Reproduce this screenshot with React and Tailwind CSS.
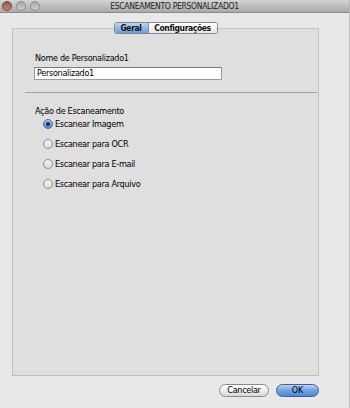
import React from "react";

const font = { fontFamily: '"DejaVu Sans Condensed", "Liberation Sans", Arial, sans-serif' };

function Radio({ checked, label }) {
  return (
    <div className="flex items-center h-[20px]">
      {checked ? (
        <span className="w-[10px] h-[10px] rounded-full border border-[#4a6a9a] bg-gradient-to-b from-[#a9c8ef] to-[#4f86d0] flex items-center justify-center">
          <span className="w-[4px] h-[4px] rounded-full bg-[#1d2a44]"></span>
        </span>
      ) : (
        <span className="w-[10px] h-[10px] rounded-full border border-[#8c8c8c] bg-gradient-to-b from-[#f4f4f4] to-[#dcdcdc]"></span>
      )}
      <span className="ml-[2px] text-[9px] leading-[12px] tracking-[-0.3px] text-black">{label}</span>
    </div>
  );
}

export default function App() {
  return (
    <div className="w-[350px] h-[408px] bg-[#e8e8e8] flex flex-col overflow-hidden border-r border-[#b8b8b8]" style={font}>
      <div className="relative h-[13px] bg-gradient-to-b from-[#d4d4d4] to-[#a9a9a9] border-b border-[#8a8a8a] flex items-center justify-center">
        <div className="absolute left-[2px] top-[1px] flex gap-[4px]">
          <span className="w-[10px] h-[10px] rounded-full bg-gradient-to-b from-[#8a5a4a] to-[#c98a6a] border border-[#6e4a3e]"></span>
          <span className="w-[10px] h-[10px] rounded-full bg-gradient-to-b from-[#a8a8a8] to-[#d0d0d0] border border-[#8e8e8e]"></span>
          <span className="w-[10px] h-[10px] rounded-full bg-gradient-to-b from-[#a8a8a8] to-[#d0d0d0] border border-[#8e8e8e]"></span>
        </div>
        <span className="text-[8.5px] leading-[12px] tracking-[-0.3px] text-[#222]">ESCANEAMENTO PERSONALIZADO1</span>
      </div>
      <div className="pl-[12px] pr-[30px]">
        <div className="mt-[9px] flex justify-center relative z-10">
          <div className="flex h-[12px] rounded-[3px] border border-[#888] overflow-hidden text-[8.5px] leading-[10px] font-bold tracking-[-0.4px]">
            <span className="w-[34px] flex items-center justify-center bg-gradient-to-b from-[#bcd6f4] to-[#6a9ddc] text-[#111] border-r border-[#7e8ea8]">Geral</span>
            <span className="w-[68px] flex items-center justify-center bg-gradient-to-b from-[#ffffff] to-[#e6e6e6] text-[#111]">Configurações</span>
          </div>
        </div>
        <div className="-mt-[6px] h-[348px] bg-[#dfdfdf] border border-[#c2c2c2] border-b-[#bdbdbd] pt-[23px]">
          <div className="pl-[22px] text-[9px] leading-[12px] tracking-[-0.3px] text-black">Nome de Personalizado1</div>
          <div className="ml-[21px] mt-[3px] w-[188px] h-[13px] bg-white border border-[#9a9a9a] border-t-[#7a7a7a] text-[9px] leading-[11px] tracking-[-0.3px] pl-[2px] text-black">Personalizado1</div>
          <div className="ml-[12px] mr-[1px] mt-[12px] h-[1px] bg-[#a3a3a3]"></div>
          <div className="pl-[22px] mt-[12px] text-[9px] leading-[12px] tracking-[-0.3px] text-black">Ação de Escaneamento</div>
          <div className="pl-[30px] -mt-[3px] flex flex-col">
            <Radio checked label="Escanear Imagem" />
            <Radio label="Escanear para OCR" />
            <Radio label="Escanear para E-mail" />
            <Radio label="Escanear para Arquivo" />
          </div>
        </div>
      </div>
      <div className="mt-[8px] flex justify-end pr-[30px] gap-[7px]">
        <button className="w-[50px] h-[13px] rounded-full border border-[#8a8a8a] bg-gradient-to-b from-[#ffffff] via-[#f0f0f0] to-[#d8d8d8] text-[9px] leading-[11px] tracking-[-0.3px] text-black">Cancelar</button>
        <button className="w-[43px] h-[13px] rounded-full border border-[#3f5f8f] bg-gradient-to-b from-[#b7d3f5] via-[#6fa3e3] to-[#4d8ad8] text-[9px] leading-[11px] text-black">OK</button>
      </div>
    </div>
  );
}
